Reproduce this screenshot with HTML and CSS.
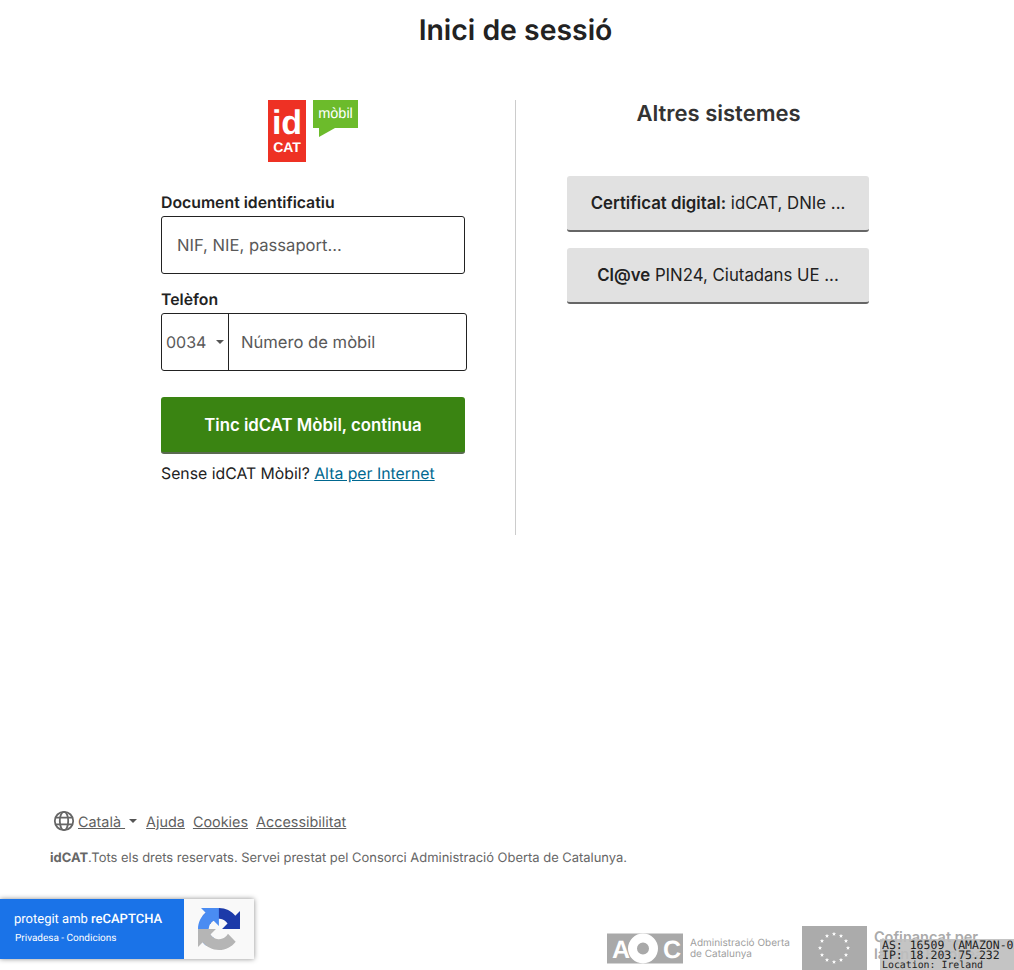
FILE: index.html
```html
<!DOCTYPE html>
<html lang="ca">
<head>
    <meta charset="UTF-8">
    <meta name="viewport" content="width=device-width, initial-scale=1.0">
    <title>Inici de sessió</title>
    <link rel="stylesheet" href="styles.css">
</head>
<body>
    <h1 class="page-title">Inici de sessió</h1>

    <main class="columns">
        <section class="col col-left">
            <div class="logo">
                <div class="logo-red"><span class="logo-id">id</span><span class="logo-cat">CAT</span></div>
                <div class="logo-bubble">mòbil</div>
            </div>

            <label class="field-label">Document identificatiu</label>
            <div class="input-box"><span class="placeholder">NIF, NIE, passaport...</span></div>

            <label class="field-label field-label-phone">Telèfon</label>
            <div class="phone-box">
                <div class="prefix"><span>0034</span><i class="caret"></i></div>
                <span class="placeholder phone-placeholder">Número de mòbil</span>
            </div>

            <button class="btn-green">Tinc idCAT Mòbil, continua</button>
            <p class="signup">Sense idCAT Mòbil? <a href="#">Alta per Internet</a></p>
        </section>

        <section class="col col-right">
            <h2>Altres sistemes</h2>
            <button class="btn-grey"><b>Certificat digital:</b> idCAT, DNIe ...</button>
            <button class="btn-grey"><b>Cl@ve</b> PIN24, Ciutadans UE ...</button>
        </section>
    </main>

    <footer class="footer">
        <div class="footer-links">
            <svg class="globe" width="22" height="22" viewBox="0 0 22 22" fill="none" stroke="#666" stroke-width="1.8">
                <circle cx="11" cy="11" r="9.2"/>
                <ellipse cx="11" cy="11" rx="4.2" ry="9.2"/>
                <path d="M2.6 7.6h16.8M2.6 14.4h16.8"/>
            </svg>
            <a href="#" class="lang">Català&nbsp;</a><i class="caret caret-lang"></i>
            <a href="#">Ajuda</a>
            <a href="#">Cookies</a>
            <a href="#">Accessibilitat</a>
        </div>
        <p class="copy"><b>idCAT</b>.Tots els drets reservats. Servei prestat pel Consorci Administració Oberta de Catalunya.</p>

        <div class="partners">
            <div class="aoc">
                <svg width="77" height="31" viewBox="0 0 77 31">
                    <rect y="0.5" width="76" height="30" fill="#a9a9a9"/>
                    <text x="5" y="24.5" class="aoc-letter">A</text>
                    <circle cx="36" cy="15.5" r="10.5" fill="#a9a9a9" stroke="#fff" stroke-width="9"/>
                    <text x="56" y="24.5" class="aoc-letter">C</text>
                </svg>
                <span class="aoc-text">Administració Oberta<br>de Catalunya</span>
            </div>
            <div class="eu-flag">
                <svg width="65" height="44" viewBox="0 0 65 44" fill="#fff">
                    <defs><path id="star" d="M0-2.2.6-.7 2.1-.7.9.3 1.3 1.8 0 .9-1.3 1.8-.9.3-2.1-.7-.6-.7z"/></defs>
                    <use href="#star" x="32" y="8"/><use href="#star" x="39" y="10"/><use href="#star" x="44" y="15"/>
                    <use href="#star" x="46" y="22"/><use href="#star" x="44" y="29"/><use href="#star" x="39" y="34"/>
                    <use href="#star" x="32" y="36"/><use href="#star" x="25" y="34"/><use href="#star" x="20" y="29"/>
                    <use href="#star" x="18" y="22"/><use href="#star" x="20" y="15"/><use href="#star" x="25" y="10"/>
                </svg>
            </div>
            <div class="eu-text">Cofinançat per<br>la Unió Europea</div>
        </div>
    </footer>

    <div class="recaptcha">
        <div class="recaptcha-blue">
            <span class="recaptcha-title">protegit amb <b>reCAPTCHA</b></span>
            <span class="recaptcha-sub">Privadesa - Condicions</span>
        </div>
        <div class="recaptcha-icon">
            <svg width="42" height="42" viewBox="0 0 64 64">
                <path fill="#1c3aa9" d="M64 31.955l-.033-1.37V4.687l-7.16 7.16C50.948 4.674 42.033.093 32.05.093c-10.4 0-19.622 4.96-25.458 12.64l11.736 11.86a15.55 15.55 0 0 1 4.754-5.334c2.05-1.6 4.952-2.906 8.968-2.906.485 0 .86.057 1.135.163 4.976.393 9.288 3.14 11.828 7.124l-8.307 8.307 32.273.003"/>
                <path fill="#4a8cf2" d="M31.862.094l-1.37.033H4.594l7.16 7.16C4.58 13.147 0 22.06 0 32.046c0 10.4 4.96 19.622 12.64 25.458l11.86-11.736a15.55 15.55 0 0 1-5.334-4.754c-1.6-2.05-2.906-4.952-2.906-8.968 0-.485.057-.86.163-1.135.393-4.976 3.14-9.288 7.124-11.828l8.307 8.307.003-32.273"/>
                <path fill="#b5b5b5" d="M.001 32.045l.033 1.37v25.898l7.16-7.16c5.86 7.173 14.774 11.754 24.76 11.754 10.4 0 19.622-4.96 25.458-12.64L45.677 39.407a15.55 15.55 0 0 1-4.754 5.334c-2.05 1.6-4.952 2.906-8.968 2.906-.485 0-.86-.057-1.135-.163-4.976-.393-9.288-3.14-11.828-7.124l8.307-8.307-32.273-.003"/>
            </svg>
        </div>
    </div>

    <div class="ip-box">
        <div>AS: 16509 (AMAZON-02)</div>
        <div>IP: 18.203.75.232</div>
        <div class="ip-location">Location: Ireland</div>
    </div>
</body>
</html>
```

FILE: styles.css
```css
html, body {
    margin: 0;
    padding: 0;
}
body {
    font-family: Inter, 'Liberation Sans', sans-serif;
    text-rendering: geometricPrecision;
    color: #222;
    background-color: #fff;
    height: 970px;
    overflow: hidden;
    display: flex;
    flex-direction: column;
    position: relative;
}
.page-title {
    margin: 0;
    padding: 12px 0 0 17px;
    height: 100px;
    box-sizing: border-box;
    text-align: center;
    font-size: 28.4px;
    line-height: 36px;
    font-weight: 600;
}
.columns {
    display: grid;
    grid-template-columns: 405px 405px;
    width: 810px;
    margin-left: 111px;
    height: 435px;
}
.col {
    box-sizing: border-box;
    padding: 0 50px;
}
.col-left {
    border-right: 1px solid #ccc;
}
.logo {
    display: flex;
    justify-content: center;
    gap: 7px;
    height: 62px;
    margin-bottom: 32px;
    align-items: flex-start;
}
.logo-red {
    width: 38px;
    height: 62px;
    background-color: #ee3124;
    color: #fff;
    font-family: 'Liberation Sans', sans-serif;
    font-weight: 700;
    display: flex;
    flex-direction: column;
    align-items: center;
}
.logo-id {
    font-size: 34px;
    line-height: 34px;
    margin-top: 6px;
}
.logo-cat {
    font-size: 14px;
    line-height: 14px;
}
.logo-bubble {
    position: relative;
    width: 45px;
    height: 28px;
    background-color: #6cbb2b;
    color: #fff;
    font-family: 'Liberation Sans', sans-serif;
    font-size: 14.5px;
    line-height: 28px;
    text-align: center;
}
.logo-bubble::after {
    content: "";
    position: absolute;
    left: 6px;
    top: 28px;
    border-right: 16px solid transparent;
    border-top: 9px solid #6cbb2b;
}
.field-label {
    display: block;
    font-size: 15.8px;
    line-height: 18px;
    font-weight: 600;
    margin-bottom: 4px;
}
.field-label-phone {
    margin-top: 17px;
}
.input-box, .phone-box {
    box-sizing: border-box;
    height: 58px;
    border: 1px solid #222;
    border-radius: 3px;
    display: flex;
    align-items: center;
}
.input-box {
    width: 304px;
    padding-left: 15px;
}
.phone-box {
    width: 306px;
}
.placeholder {
    font-size: 16.6px;
    color: #595959;
    padding-top: 1px;
}
.prefix {
    width: 67px;
    height: 100%;
    box-sizing: border-box;
    border-right: 1px solid #222;
    padding-left: 4px;
    display: flex;
    align-items: center;
    font-size: 16px;
    color: #595959;
}
.caret {
    display: inline-block;
    border-left: 4px solid transparent;
    border-right: 4px solid transparent;
    border-top: 4px solid #555;
}
.prefix .caret {
    margin-left: 10px;
}
.phone-placeholder {
    margin-left: 12px;
}
.btn-green, .btn-grey {
    display: block;
    box-sizing: border-box;
    border: 0;
    border-radius: 3px;
    font-family: inherit;
    font-size: 16.8px;
}
.btn-green {
    width: 304px;
    height: 57px;
    margin-top: 26px;
    background-color: #3a8412;
    border-bottom: 2px solid #5a6a50;
    color: #fff;
    font-weight: 600;
}
.signup {
    margin: 10px 0 0;
    font-size: 15.8px;
    line-height: 20px;
}
.signup a {
    color: #00678f;
}
.col-right h2 {
    margin: 0 0 48px;
    padding-top: 1px;
    font-size: 22px;
    line-height: 27px;
    font-weight: 600;
    color: #333;
    text-align: center;
}
.col-right {
    padding: 0 51px;
}
.btn-grey {
    width: 302px;
    height: 56px;
    margin-bottom: 16px;
    background-color: #e1e1e1;
    border-bottom: 2px solid #666;
    color: #222;
}
.btn-grey b {
    font-weight: 600;
}
.footer {
    margin-top: auto;
    padding-left: 50px;
}
.footer-links {
    display: flex;
    align-items: center;
    padding-left: 3px;
    height: 22px;
    font-size: 14.4px;
}
.footer-links a {
    color: #5f5f5f;
    margin-right: 8px;
    padding-top: 2px;
}
.globe {
    margin-right: 3px;
}
.footer-links .lang {
    margin-right: 0;
}
.caret-lang {
    margin: 0 9px 0 4px;
}
.copy {
    margin: 18px 0 0;
    font-size: 12.95px;
    line-height: 16px;
    color: #666;
}
.copy b {
    font-weight: 700;
}
.partners {
    display: flex;
    align-items: flex-end;
    margin-top: 60px;
    padding-left: 557px;
    height: 44px;
    box-sizing: border-box;
    width: 964px;
}
.aoc {
    display: flex;
    align-items: center;
    gap: 6px;
    height: 31px;
    margin-bottom: 6px;
}
.aoc-letter {
    font-family: 'Liberation Sans', sans-serif;
    font-size: 25px;
    font-weight: 700;
    fill: #fff;
}
.aoc-text {
    font-size: 10px;
    line-height: 11px;
    color: #a0a0a0;
    white-space: nowrap;
}
.eu-flag {
    margin-left: 12px;
    width: 65px;
    height: 44px;
    background-color: #ababab;
    flex-shrink: 0;
}
.eu-text {
    margin: 0 0 7px 7px;
    font-size: 14.5px;
    line-height: 17px;
    font-weight: 600;
    color: #aaa;
    white-space: nowrap;
    flex-shrink: 0;
}
.recaptcha {
    position: absolute;
    left: 0;
    top: 899px;
    width: 254px;
    height: 60px;
    display: flex;
    box-shadow: 0 0 5px rgba(0, 0, 0, 0.45);
    font-family: Roboto, sans-serif;
}
.recaptcha-blue {
    width: 184px;
    background-color: #1a73e8;
    color: #fff;
    display: flex;
    flex-direction: column;
    box-sizing: border-box;
    padding: 13px 0 0 14px;
}
.recaptcha-title {
    font-size: 13px;
    line-height: 15px;
}
.recaptcha-title b {
    font-weight: 500;
}
.recaptcha-sub {
    font-size: 10px;
    line-height: 12px;
    margin: 6px 0 0 1px;
}
.recaptcha-icon {
    flex: 1;
    background-color: #f9f9f9;
    display: flex;
    align-items: center;
    justify-content: center;
    padding-right: 1px;
}
.ip-box {
    position: absolute;
    left: 880px;
    top: 939px;
    width: 134px;
    height: 31px;
    overflow: hidden;
    background-color: rgba(190, 190, 190, 0.9);
    color: #222;
    font-family: 'DejaVu Sans Mono', monospace;
    font-size: 11.5px;
    line-height: 9.5px;
    padding: 2px 0 0 2px;
    box-sizing: border-box;
    white-space: nowrap;
}
.ip-location {
    font-size: 9.9px;
    line-height: 11px;
}
```
